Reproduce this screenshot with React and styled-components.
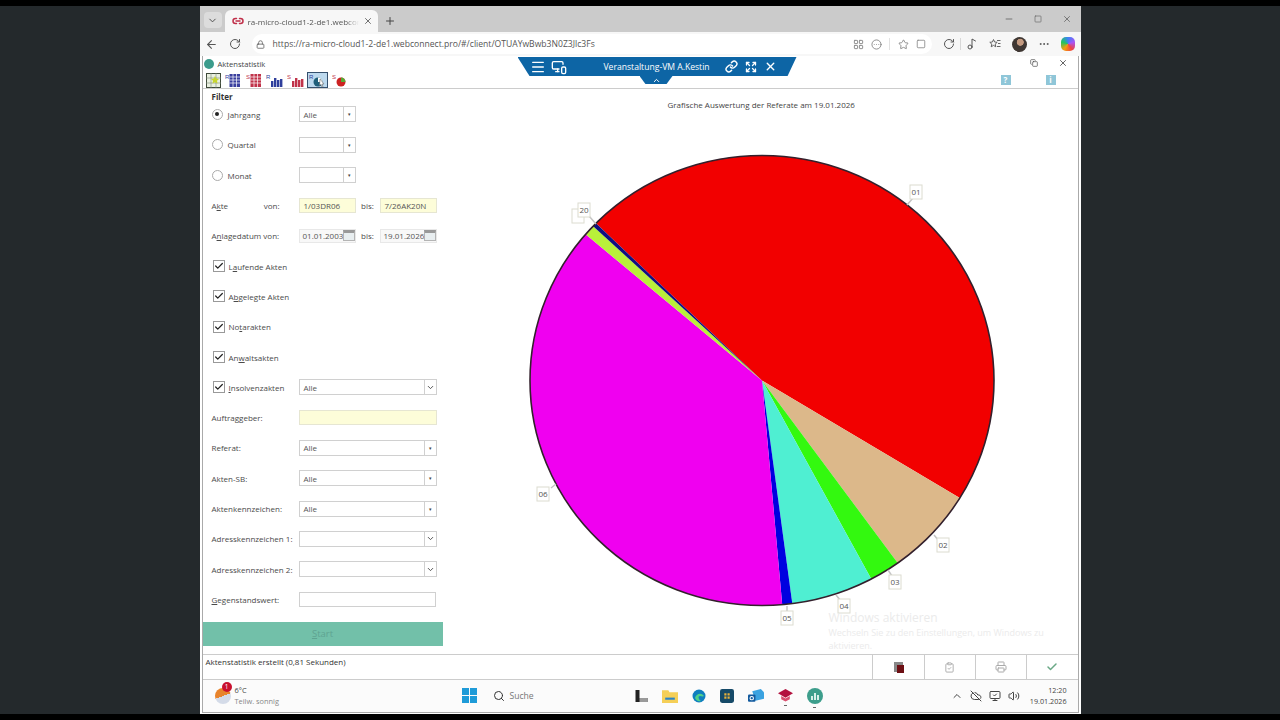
import React from "react";
import styled, { createGlobalStyle } from "styled-components";
import {
  ChevronDown,
  ArrowLeft,
  RotateCw,
  X,
  Plus,
  Minus,
  Square,
  Menu,
  MonitorSmartphone,
  Link,
  Link2,
  Expand,
  ChevronUp,
  Copy,
  Star,
  Check,
  Search,
  Printer,
  ClipboardCheck,
  Volume2,
  MonitorCheck,
  CloudOff,
  Lock,
  Ellipsis,
  CircleEllipsis,
  LayoutGrid,
  Music2,
} from "lucide-react";

const GlobalStyle = createGlobalStyle`
  html, body { margin: 0; padding: 0; height: 720px; overflow: hidden; background: #000; }
  body { font-family: "Open Sans", "Liberation Sans", sans-serif; font-size: 8px; color: #4a4a4a; }
  #root { height: 720px; }
`;

const Screen = styled.div`
  width: 1280px;
  height: 720px;
  padding: 6px 0;
  box-sizing: border-box;
  display: flex;
  background: #000;
`;

const SidePanel = styled.div`
  flex: 1;
  background: #24292c;
`;

const Window = styled.div`
  width: 881px;
  flex: none;
  background: #fff;
  display: flex;
  flex-direction: column;
  overflow: hidden;
`;

const TabBar = styled.div`
  height: 26px;
  flex: none;
  background: #cbcbcb;
  display: flex;
  align-items: flex-end;
  padding-left: 4px;
  color: #444;
`;

const TabToggle = styled.div`
  width: 18px;
  height: 16px;
  margin-bottom: 4px;
  border-radius: 4px;
  background: #dcdcdc;
  display: flex;
  align-items: center;
  justify-content: center;
`;

const Tab = styled.div`
  width: 153px;
  height: 22px;
  margin-left: 3px;
  background: #f7f7f7;
  border-radius: 6px 6px 0 0;
  display: flex;
  align-items: center;
  padding: 0 5px 0 7px;
  box-sizing: border-box;
  gap: 4px;
  font-size: 8px;
  color: #555;
  white-space: nowrap;
`;

const TabTitle = styled.span`
  flex: 1;
  min-width: 0;
  mask-image: linear-gradient(90deg, #000 88%, transparent);
`;

const NewTab = styled.div`
  margin: 0 0 5px 6px;
  display: flex;
`;

const WinControls = styled.div`
  margin-left: auto;
  align-self: center;
  display: flex;
  align-items: center;
  gap: 20px;
  padding-right: 9px;
  color: #666;
`;

const AddressRow = styled.div`
  height: 24px;
  flex: none;
  background: #f7f7f7;
  display: flex;
  align-items: center;
  padding-left: 5px;
  gap: 11px;
  color: #555;
`;

const UrlPill = styled.div`
  width: 680px;
  height: 20px;
  border-radius: 10px;
  background: #fff;
  display: flex;
  align-items: center;
  padding: 0 6px 0 4px;
  box-sizing: border-box;
  gap: 8px;
  font-size: 8.6px;
  color: #555;
  white-space: nowrap;
`;

const PillIcons = styled.div`
  margin-left: auto;
  display: flex;
  align-items: center;
  gap: 7px;
  color: #888;
`;

const PillDivider = styled.span`
  width: 1px;
  height: 12px;
  margin: 0 0.5px;
  background: #e2e2e2;
`;

const BrowserIcons = styled.div`
  display: flex;
  align-items: center;
  gap: 11px;
  color: #555;
`;

const BarDivider = styled.span`
  width: 1px;
  height: 12px;
  margin: 0 -6px;
  background: #d8d8d8;
`;

const Avatar = styled.div`
  width: 15px;
  height: 15px;
  border-radius: 50%;
  background: radial-gradient(circle at 55% 35%, #c49a80 0 25%, #3f3733 30% 75%, #d8d0c8 80%);
`;

const CopilotMark = styled.div`
  width: 14px;
  height: 14px;
  border-radius: 5px;
  background: conic-gradient(#3b82f6, #a855f7, #ef4444, #f59e0b, #22c55e, #3b82f6);
`;

const AppFrame = styled.div`
  flex: 1;
  min-height: 0;
  margin: 0 2px 1px 2px;
  border: 1px solid #aaa;
  border-width: 0 1px 1px 1px;
  display: flex;
  flex-direction: column;
`;

const AppHeader = styled.div`
  position: relative;
  flex: none;
  height: 30px;
  border-bottom: 1px solid #ccc;
  padding: 2px 0 0 1px;
`;

const TitleLine = styled.div`
  display: flex;
  align-items: center;
  gap: 4px;
  height: 12px;
  font-size: 7.6px;
  color: #444;
`;

const AppDot = styled.span`
  width: 10px;
  height: 10px;
  border-radius: 50%;
  background: #3c9c8c;
`;

const ToolRow = styled.div`
  display: flex;
  align-items: center;
  gap: 3.5px;
  margin-top: 2px;
  padding-left: 1px;
  height: 16px;
`;

const ToolButton = styled.div`
  height: 16px;
  display: flex;
  align-items: center;
  justify-content: center;
  box-sizing: border-box;
  width: ${(p) => p.$w || 17}px;
  border: ${(p) => (p.$active ? "1px solid #34506e" : "none")};
  background: ${(p) => (p.$active ? "#bcd9ee" : "transparent")};
`;

const BlueBanner = styled.div`
  position: absolute;
  left: 315px;
  top: 1px;
  width: 279px;
  height: 19px;
  background: #0d65a5;
  clip-path: polygon(0 0, 100% 0, 96.8% 100%, 4.3% 100%);
  display: flex;
  align-items: center;
  color: #fff;
  padding-left: 12px;
  box-sizing: border-box;
  font-size: 8.6px;
`;

const BannerTab = styled.div`
  position: absolute;
  left: 437px;
  top: 20px;
  width: 33px;
  height: 8px;
  background: #0d65a5;
  clip-path: polygon(0 0, 100% 0, 82% 100%, 18% 100%);
  color: #fff;
  display: flex;
  justify-content: center;
`;

const BannerTitle = styled.span`
  margin: 0 15px 0 37px;
  white-space: nowrap;
`;

const BannerIcons = styled.div`
  display: flex;
  gap: 7px;
  align-items: center;
`;

const MonitorMark = styled(MonitorSmartphone)`
  margin-left: 5px;
`;

const CloseInner = styled.div`
  position: absolute;
  top: 2px;
  right: 10px;
  display: flex;
  align-items: center;
  gap: 20px;
  color: #444;
`;

const HelpRow = styled.div`
  position: absolute;
  right: 22px;
  top: 19px;
  display: flex;
  gap: 35px;
`;

const HelpIcon = styled.div`
  width: 10px;
  height: 10px;
  background: #8fc6d8;
  color: #fff;
  font-size: 8px;
  font-weight: 700;
  line-height: 10px;
  text-align: center;
`;

const Content = styled.div`
  flex: 1;
  display: flex;
  min-height: 0;
`;

const FilterPanel = styled.div`
  width: 240px;
  flex: none;
  display: flex;
  flex-direction: column;
`;

const FilterTitle = styled.div`
  font-weight: 700;
  color: #333;
  padding-left: 9px;
  height: 16px;
  line-height: 16px;
`;

const Rows = styled.div`
  display: flex;
  flex-direction: column;
  padding-left: 9px;
`;

const Row = styled.div`
  height: ${(p) => p.$h || 30.3}px;
  margin-bottom: ${(p) => p.$mb || 0}px;
  display: flex;
  align-items: center;
  white-space: nowrap;
`;

const Key = styled.span`
  text-decoration: underline;
`;

const RadioMark = styled.span`
  width: 11px;
  height: 11px;
  box-sizing: border-box;
  border-radius: 50%;
  border: 1px solid #aaa;
  background: #fff;
  display: flex;
  align-items: center;
  justify-content: center;
  &::after {
    content: "";
    display: ${(p) => (p.$on ? "block" : "none")};
    width: 4px;
    height: 4px;
    border-radius: 50%;
    background: #222;
  }
`;

const CheckMark = styled.span`
  width: 12px;
  height: 12px;
  margin-left: 1px;
  box-sizing: border-box;
  border: 1px solid #999;
  background: #fff;
  display: flex;
  align-items: center;
  justify-content: center;
  color: #222;
`;

const OptionLabel = styled.span`
  margin-left: ${(p) => p.$ml || 4}px;
  width: ${(p) => p.$w || "auto"};
`;

const FieldLabel = styled.span`
  width: 87px;
  flex: none;
`;

const AkteVon = styled.span`
  display: flex;
  width: 87px;
  justify-content: space-between;
  padding-right: 19px;
  box-sizing: border-box;
  flex: none;
`;

const Combo = styled.div`
  width: ${(p) => p.$w}px;
  height: 16px;
  border: 1px solid #d0d0d0;
  background: #fff;
  box-sizing: border-box;
  display: flex;
  align-items: center;
  padding-left: 4px;
  color: #555;
`;

const ComboText = styled.span`
  flex: 1;
`;

const ComboButton = styled.span`
  width: 11px;
  height: 100%;
  border-left: 1px solid #d0d0d0;
  display: flex;
  align-items: center;
  justify-content: center;
  color: #444;
  font-size: 5px;
`;

const TextBox = styled.div`
  width: ${(p) => p.$w}px;
  height: 15px;
  box-sizing: border-box;
  border: 1px solid ${(p) => (p.$tint ? "#e6e6d2" : "#d0d0d0")};
  background: ${(p) => (p.$tint ? "#fdfdd9" : "#fff")};
  padding-left: 4px;
  line-height: 13px;
  color: #555;
`;

const DateBox = styled.div`
  width: 57px;
  height: 14px;
  box-sizing: border-box;
  background: #f8f8f8;
  border: 1px solid #e8e8e8;
  display: flex;
  align-items: center;
  padding-left: 3px;
  color: #555;
  justify-content: space-between;
`;

const CalIcon = styled.span`
  width: 12px;
  height: 11px;
  box-sizing: border-box;
  border: 1px solid #b4b4b4;
  border-top: 3px solid #999;
  background: #e8eef0;
`;

const Bis = styled.span`
  width: 24px;
  text-align: center;
  flex: none;
`;

const StartButton = styled.div`
  width: 240px;
  height: 24px;
  margin-top: 7px;
  background: #72c0a9;
  color: #5fa391;
  font-size: 9.5px;
  display: flex;
  align-items: center;
  justify-content: center;
`;

const ChartArea = styled.div`
  flex: 1;
  position: relative;
`;

const ChartSvg = styled.svg`
  position: absolute;
  left: 0;
  top: 0;
`;

const ChartTitle = styled.div`
  position: absolute;
  left: 225px;
  top: 10px;
  color: #444;
  white-space: nowrap;
`;

const Watermark = styled.div`
  position: absolute;
  left: 386px;
  top: 521px;
  width: 240px;
  color: #ebebeb;
  font-size: 9px;
  line-height: 13px;
`;

const WatermarkTitle = styled.div`
  font-size: 12px;
  line-height: 16px;
`;

const StatusBar = styled.div`
  height: 24px;
  flex: none;
  border-top: 1px solid #ccc;
  border-bottom: 1px solid #ccc;
  display: flex;
  align-items: stretch;
`;

const StatusText = styled.div`
  flex: 1;
  padding: 1px 0 0 3px;
  color: #333;
`;

const StatusButton = styled.div`
  width: 51.3px;
  box-sizing: border-box;
  border-left: 1px solid #ccc;
  display: flex;
  align-items: center;
  justify-content: center;
  color: ${(p) => p.$c || "#aaa"};
`;

const StackIcon = styled.span`
  position: relative;
  width: 9px;
  height: 10px;
  background: #888;
  &::after {
    content: "";
    position: absolute;
    left: 3px;
    top: 3px;
    width: 7px;
    height: 8px;
    background: #6d0f14;
  }
`;

const Taskbar = styled.div`
  height: 32px;
  flex: none;
  background: #fbfbfb;
  display: flex;
  align-items: center;
  position: relative;
  padding-bottom: 1px;
  box-sizing: border-box;
`;

const Weather = styled.div`
  position: relative;
  display: flex;
  align-items: center;
  margin-left: 12px;
  gap: 4px;
`;

const WeatherIcon = styled.div`
  width: 16px;
  height: 16px;
  border-radius: 50%;
  background: linear-gradient(160deg, #e8842c 50%, #d4dbe8 50%);
`;

const Badge = styled.span`
  position: absolute;
  left: 7px;
  top: -3px;
  width: 10px;
  height: 10px;
  border-radius: 50%;
  background: #c8102e;
  color: #fff;
  font-size: 6.5px;
  line-height: 10px;
  text-align: center;
`;

const WeatherText = styled.div`
  font-size: 7.4px;
  line-height: 10.5px;
  color: #444;
`;

const WeatherSub = styled.div`
  color: #888;
`;

const TaskCenter = styled.div`
  position: absolute;
  left: 259px;
  top: 0;
  height: 100%;
  padding-bottom: 1px;
  box-sizing: border-box;
  display: flex;
  align-items: center;
`;

const SearchPill = styled.div`
  width: 142px;
  margin-left: 16px;
  display: flex;
  align-items: center;
  gap: 5px;
  color: #777;
  font-size: 8.6px;
`;

const TaskApps = styled.div`
  display: flex;
  align-items: center;
  gap: 14px;
`;

const TaskApp = styled.div`
  position: relative;
  display: flex;
  &::after {
    content: "";
    display: ${(p) => (p.$running ? "block" : "none")};
    position: absolute;
    left: 50%;
    bottom: -4px;
    width: 3px;
    height: 1px;
    margin-left: -1.5px;
    background: #666;
  }
`;

const Tray = styled.div`
  margin-left: auto;
  display: flex;
  align-items: center;
  gap: 7px;
  padding-right: 11px;
  color: #444;
`;

const Clock = styled.div`
  margin-left: 3px;
  text-align: right;
  font-size: 7.2px;
  line-height: 10.5px;
  color: #444;
`;

const letterFont = "Liberation Sans, sans-serif";

const StartIcon = () => (
  <svg width="15" height="15" viewBox="0 0 15 15">
    <rect x="0.5" y="0.5" width="14" height="14" fill="#e9efe0" stroke="#3f4a3a" />
    <path d="M0 5h15M0 10h15M5 0v15M10 0v15" stroke="#7d8a78" strokeWidth="0.6" />
    <path d="M9 3l1.2 2.6L13 6l-2 1.8.5 2.7L9 9.2l-2.5 1.3.5-2.7L5 6l2.8-.4z" fill="#c7d62c" />
  </svg>
);

const GridIcon = ({ kind, letter }) => {
  const c = kind === "blue" ? "#3a3f9e" : "#c0334a";
  return (
    <svg width="17" height="14" viewBox="0 0 17 14">
      <text x="0" y="6" fontSize="6" fill={c} fontFamily={letterFont}>{letter}</text>
      <rect x="4.5" y="1" width="10.5" height="13" fill={c} />
      <path d="M4.5 4h10.5M4.5 7h10.5M4.5 10h10.5M8 1v13M11.5 1v13" stroke="#fff" strokeWidth="0.7" />
    </svg>
  );
};

const BarsIcon = ({ kind, letter }) => {
  const c = kind === "blue" ? "#2f3f9c" : "#c0334a";
  return (
    <svg width="17" height="14" viewBox="0 0 17 14">
      <text x="0" y="6" fontSize="6" fill={c} fontFamily={letterFont}>{letter}</text>
      <path d="M5 14V8h2.4v6zM8 14V5h2.4v9zM11 14V7h2.4v7zM14 14V6h2.4v8z" fill={c} />
    </svg>
  );
};

const PieIcon = ({ letter, active }) => (
  <svg width="17" height="14" viewBox="0 0 17 14">
    <text x="0" y="6" fontSize="6" fill={active ? "#2f3f9c" : "#c0334a"} fontFamily={letterFont}>{letter}</text>
    <circle cx="9" cy="9" r="4.5" fill={active ? "#1f5f7a" : "#c22"} />
    <path d="M9 9V4.5A4.5 4.5 0 0 1 13.5 9z" fill={active ? "#fff" : "#5a3"} />
    {active && <path d="M11 6l4 5-2 0 1 3-1 .4-1-3-1.5 1.2z" fill="#fff" stroke="#555" strokeWidth="0.5" />}
  </svg>
);

const FavoritesIcon = () => (
  <svg width="12" height="12" viewBox="0 0 12 12" fill="none" stroke="currentColor" strokeWidth="0.9">
    <path d="M4.5 1.5l1.1 2.5 2.6.3-2 1.8.6 2.7-2.3-1.4-2.3 1.4.6-2.7-2-1.8 2.6-.3z" />
    <path d="M8 2.5h3.5M9 5.5h2.5M8 8.5h3.5" />
  </svg>
);

const EdgeLogo = () => (
  <svg width="14" height="14" viewBox="0 0 14 14">
    <circle cx="7" cy="7" r="6.5" fill="#0f7fbf" />
    <path d="M3 9c1-4 6-6 9-2-1 1-3 0-4 0-2 0-2 3 1 5-3 1-5-1-6-3z" fill="#4fd18a" />
  </svg>
);

const WinLogo = () => (
  <svg width="15" height="15" viewBox="0 0 15 15">
    <path d="M0 0h7v7H0zM8 0h7v7H8zM0 8h7v7H0zM8 8h7v7H8z" fill="#1f9bd8" />
  </svg>
);

const FolderIcon = () => (
  <svg width="16" height="14" viewBox="0 0 15 13">
    <path d="M0 1h6l1 2h8v10H0z" fill="#f5cf57" />
    <rect x="3" y="8" width="9" height="2" fill="#2a84c6" />
  </svg>
);

const TerminalIcon = () => (
  <svg width="13" height="12" viewBox="0 0 12 12">
    <path d="M0 0h4v8h8v4H0z" fill="#222" />
    <rect x="4" y="8" width="8" height="4" fill="#9a9a9a" />
  </svg>
);

const StoreIcon = () => (
  <svg width="14" height="14" viewBox="0 0 13 13">
    <rect width="13" height="13" rx="2" fill="#164a68" />
    <path d="M4 4h2v2H4zM7 4h2v2H7zM4 7h2v2H4zM7 7h2v2H7z" fill="#e8b13a" />
  </svg>
);

const OutlookIcon = () => (
  <svg width="16" height="14" viewBox="0 0 15 13">
    <path d="M4 2l8-2 3 3v6l-8 2z" fill="#3aa2e0" />
    <rect x="0" y="5" width="7" height="7" rx="1" fill="#125a9e" />
    <circle cx="3.5" cy="8.5" r="1.6" fill="none" stroke="#fff" />
  </svg>
);

const CapIcon = () => (
  <svg width="15" height="13" viewBox="0 0 14 12">
    <path d="M7 0l7 4-7 4-7-4z" fill="#b3123f" />
    <path d="M3 6.5v3l4 2 4-2v-3l-4 2.3z" fill="#d94f6f" />
  </svg>
);

const StatApp = () => (
  <svg width="16" height="16" viewBox="0 0 16 16">
    <circle cx="8" cy="8" r="8" fill="#3d9e8c" />
    <path d="M4 12V8h2v4zM7 12V5h2v7zM10 12V7h2v5z" fill="#d8f0ea" />
  </svg>
);

// the pie is a slightly squashed circle in the video, so it is drawn as an ellipse
const CX = 319;
const CY = 291.5;
const RX = 232;
const RY = 225;

const point = (deg) => {
  const a = (deg * Math.PI) / 180;
  return [CX + RX * Math.sin(a), CY - RY * Math.cos(a)];
};

const wedge = (from, to) => {
  const [x1, y1] = point(from);
  const [x2, y2] = point(to);
  const large = to - from > 180 ? 1 : 0;
  return `M${CX} ${CY}L${x1} ${y1}A${RX} ${RY} 0 ${large} 1 ${x2} ${y2}Z`;
};

const pie = [
  { from: -45.7, to: 121.5, fill: "#f20000" },
  { from: 121.5, to: 144.2, fill: "#dcb88a" },
  { from: 144.2, to: 151.9, fill: "#33f90f" },
  { from: 151.9, to: 172.5, fill: "#4fefd2" },
  { from: 172.5, to: 175, fill: "#0000e0" },
  { from: 175, to: 310.5, fill: "#f000f0" },
  { from: 310.5, to: 313.3, fill: "#b9f03a" },
  { from: 313.3, to: 314.3, fill: "#101080" },
];

const pieLabels = [
  { text: "01", x: 473, y: 103, line: "M464 116L470 109" },
  { text: "02", x: 500, y: 456, line: "M491 446L496 452" },
  { text: "03", x: 452, y: 493, line: "M445 481L449 487" },
  { text: "04", x: 401, y: 517, line: "M393 506L398 512" },
  { text: "05", x: 344, y: 529, line: "M344 517L344 523" },
  { text: "06", x: 100, y: 405, line: "M108 399L113 395" },
  { text: "", x: 135, y: 127, line: "" },
  { text: "20", x: 141, y: 121, line: "M146 127L153 135" },
];

const PieChart = () => (
  <ChartSvg width="635" height="566" viewBox="0 0 635 566">
    {pie.map((s) => (
      <path key={s.from} d={wedge(s.from, s.to)} fill={s.fill} />
    ))}
    <ellipse cx={CX} cy={CY} rx={RX} ry={RY} fill="none" stroke="#33202c" strokeWidth="1.6" />
    {pieLabels.map((l) => (
      <g key={l.x}>
        {l.line && <path d={l.line} stroke="#c4c4c4" strokeWidth="1.5" fill="none" />}
        <rect x={l.x - 6} y={l.y - 7} width="12" height="14" fill="#fff" stroke="#dcdcd0" />
        <text x={l.x} y={l.y + 3} fontSize="8" fill="#555" textAnchor="middle" fontFamily="Open Sans, sans-serif">
          {l.text}
        </text>
      </g>
    ))}
  </ChartSvg>
);

const Caret = () => <ChevronDown size={9} strokeWidth={2.4} />;

const comboRows = [
  { label: "Referat:", value: "Alle" },
  { label: "Akten-SB:", value: "Alle" },
  { label: "Aktenkennzeichen:", value: "Alle" },
];

const Tick = () => (
  <CheckMark>
    <Check size={10} strokeWidth={3} />
  </CheckMark>
);

const App = () => (
  <>
    <GlobalStyle />
    <Screen>
      <SidePanel />
      <Window>
        <TabBar>
          <TabToggle><ChevronDown size={11} /></TabToggle>
          <Tab>
            <Link2 size={12} color="#c0304a" strokeWidth={3} />
            <TabTitle>ra-micro-cloud1-2-de1.webconn</TabTitle>
            <X size={10} />
          </Tab>
          <NewTab><Plus size={12} /></NewTab>
          <WinControls>
            <Minus size={10} />
            <Square size={8} />
            <X size={10} />
          </WinControls>
        </TabBar>
        <AddressRow>
          <ArrowLeft size={13} />
          <RotateCw size={12} />
          <UrlPill>
            <Lock size={9} />
            https://ra-micro-cloud1-2-de1.webconnect.pro/#/client/OTUAYwBwb3N0Z3Jlc3Fs
            <PillIcons>
              <LayoutGrid size={11} />
              <CircleEllipsis size={11} />
              <PillDivider />
              <Star size={11} />
              <Square size={10} />
            </PillIcons>
          </UrlPill>
          <BrowserIcons>
            <RotateCw size={12} />
            <BarDivider />
            <Music2 size={12} />
            <FavoritesIcon />
            <Avatar />
            <Ellipsis size={12} />
            <CopilotMark />
          </BrowserIcons>
        </AddressRow>
        <AppFrame>
          <AppHeader>
            <TitleLine>
              <AppDot />
              Aktenstatistik
            </TitleLine>
            <ToolRow>
              <ToolButton><StartIcon /></ToolButton>
              <ToolButton><GridIcon kind="blue" letter="R" /></ToolButton>
              <ToolButton><GridIcon kind="red" letter="S" /></ToolButton>
              <ToolButton><BarsIcon kind="blue" letter="R" /></ToolButton>
              <ToolButton><BarsIcon kind="red" letter="S" /></ToolButton>
              <ToolButton $w={21} $active><PieIcon letter="R" active /></ToolButton>
              <ToolButton><PieIcon letter="S" /></ToolButton>
            </ToolRow>
            <BlueBanner>
              <Menu size={16} />
              <MonitorMark size={16} />
              <BannerTitle>Veranstaltung-VM A.Kestin</BannerTitle>
              <BannerIcons>
                <Link size={13} strokeWidth={2.6} />
                <Expand size={12} strokeWidth={2.6} />
                <X size={13} strokeWidth={2.6} />
              </BannerIcons>
            </BlueBanner>
            <BannerTab><ChevronUp size={9} strokeWidth={2.6} /></BannerTab>
            <CloseInner>
              <Copy size={8} />
              <X size={10} />
            </CloseInner>
            <HelpRow>
              <HelpIcon>?</HelpIcon>
              <HelpIcon>i</HelpIcon>
            </HelpRow>
          </AppHeader>
          <Content>
            <FilterPanel>
              <FilterTitle>Filter</FilterTitle>
              <Rows>
                <Row $h={18} $mb={6.85}>
                  <RadioMark $on />
                  <OptionLabel $ml={5} $w="71px">Jahrgang</OptionLabel>
                  <Combo $w={57}><ComboText>Alle</ComboText><ComboButton>▾</ComboButton></Combo>
                </Row>
                <Row>
                  <RadioMark />
                  <OptionLabel $ml={5} $w="71px">Quartal</OptionLabel>
                  <Combo $w={57}><ComboText /><ComboButton>▾</ComboButton></Combo>
                </Row>
                <Row>
                  <RadioMark />
                  <OptionLabel $ml={5} $w="71px">Monat</OptionLabel>
                  <Combo $w={57}><ComboText /><ComboButton>▾</ComboButton></Combo>
                </Row>
                <Row>
                  <AkteVon><span>A<Key>k</Key>te</span><span>von:</span></AkteVon>
                  <TextBox $w={57} $tint>1/03DR06</TextBox>
                  <Bis>bis:</Bis>
                  <TextBox $w={57} $tint>7/26AK20N</TextBox>
                </Row>
                <Row>
                  <FieldLabel>A<Key>n</Key>lagedatum von:</FieldLabel>
                  <DateBox>01.01.2003<CalIcon /></DateBox>
                  <Bis>bis:</Bis>
                  <DateBox>19.01.2026<CalIcon /></DateBox>
                </Row>
                <Row><Tick /><OptionLabel>L<Key>a</Key>ufende Akten</OptionLabel></Row>
                <Row><Tick /><OptionLabel>A<Key>b</Key>gelegte Akten</OptionLabel></Row>
                <Row><Tick /><OptionLabel>No<Key>t</Key>arakten</OptionLabel></Row>
                <Row><Tick /><OptionLabel>An<Key>w</Key>altsakten</OptionLabel></Row>
                <Row>
                  <Tick />
                  <OptionLabel $w="70px"><Key>I</Key>nsolvenzakten</OptionLabel>
                  <Combo $w={138}><ComboText>Alle</ComboText><ComboButton><Caret /></ComboButton></Combo>
                </Row>
                <Row>
                  <FieldLabel>Auftraggeber:</FieldLabel>
                  <TextBox $w={138} $tint />
                </Row>
                {comboRows.map((r) => (
                  <Row key={r.label}>
                    <FieldLabel>{r.label}</FieldLabel>
                    <Combo $w={138}><ComboText>{r.value}</ComboText><ComboButton>▾</ComboButton></Combo>
                  </Row>
                ))}
                <Row>
                  <FieldLabel>Adresskennzeichen 1:</FieldLabel>
                  <Combo $w={138}><ComboText /><ComboButton><Caret /></ComboButton></Combo>
                </Row>
                <Row>
                  <FieldLabel>Adresskennzeichen 2:</FieldLabel>
                  <Combo $w={138}><ComboText /><ComboButton><Caret /></ComboButton></Combo>
                </Row>
                <Row>
                  <FieldLabel><Key>G</Key>egenstandswert:</FieldLabel>
                  <TextBox $w={137} />
                </Row>
              </Rows>
              <StartButton><span><Key>S</Key>tart</span></StartButton>
            </FilterPanel>
            <ChartArea>
              <ChartTitle>Grafische Auswertung der Referate am 19.01.2026</ChartTitle>
              <PieChart />
              <Watermark>
                <WatermarkTitle>Windows aktivieren</WatermarkTitle>
                Wechseln Sie zu den Einstellungen, um Windows zu aktivieren.
              </Watermark>
            </ChartArea>
          </Content>
          <StatusBar>
            <StatusText>Aktenstatistik erstellt (0,81 Sekunden)</StatusText>
            <StatusButton><StackIcon /></StatusButton>
            <StatusButton><ClipboardCheck size={11} /></StatusButton>
            <StatusButton><Printer size={12} /></StatusButton>
            <StatusButton $c="#6aa886"><Check size={12} strokeWidth={3} /></StatusButton>
          </StatusBar>
          <Taskbar>
            <Weather>
              <WeatherIcon />
              <Badge>1</Badge>
              <WeatherText>
                6°C
                <WeatherSub>Teilw. sonnig</WeatherSub>
              </WeatherText>
            </Weather>
            <TaskCenter>
              <WinLogo />
              <SearchPill><Search size={12} color="#333" />Suche</SearchPill>
              <TaskApps>
                <TaskApp><TerminalIcon /></TaskApp>
                <TaskApp><FolderIcon /></TaskApp>
                <TaskApp><EdgeLogo /></TaskApp>
                <TaskApp><StoreIcon /></TaskApp>
                <TaskApp><OutlookIcon /></TaskApp>
                <TaskApp $running><CapIcon /></TaskApp>
                <TaskApp $running><StatApp /></TaskApp>
              </TaskApps>
            </TaskCenter>
            <Tray>
              <ChevronUp size={12} />
              <CloudOff size={12} />
              <MonitorCheck size={12} />
              <Volume2 size={12} />
              <Clock>12:20<br />19.01.2026</Clock>
            </Tray>
          </Taskbar>
        </AppFrame>
      </Window>
      <SidePanel />
    </Screen>
  </>
);

export default App;
